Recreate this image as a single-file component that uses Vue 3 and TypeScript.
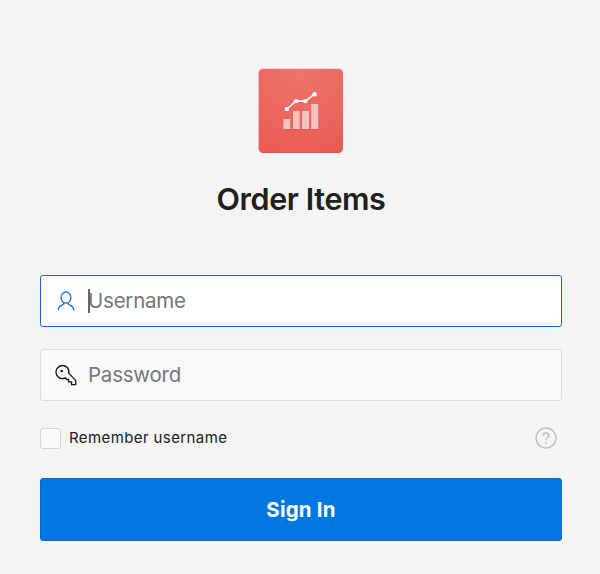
<script setup lang="ts">
import { ref } from 'vue'

const username = ref<string>('')
const password = ref<string>('')
const remember = ref<boolean>(false)
</script>

<template>
  <main class="login">
    <header class="brand">
      <svg class="logo" width="86" height="85" viewBox="0 0 86 85" aria-hidden="true">
        <defs>
          <radialGradient id="tile" cx="0.5" cy="0" r="1.05">
            <stop offset="0" stop-color="#ed766f" />
            <stop offset="1" stop-color="#e95b54" />
          </radialGradient>
        </defs>
        <rect x="0.6" y="0.8" width="84.4" height="84.2" rx="4.5" fill="url(#tile)" />
        <path d="M4 84.5H81" stroke="#da524c" stroke-width="0.9" />
        <path d="M25.4 61h6.8v1.2h-6.8zM35 61h6.6v1.2h-6.6zM44 61h7v1.2h-7zM53 61h7.2v1.2h-7.2z" fill="#d9514b" opacity="0.4" />
        <path d="M25.4 51h6.8v10h-6.8zM35 43h6.6v18H35zM44 43h7v18h-7zM53.2 36h7v25h-7z" fill="#f8c2c0" />
        <path d="M28.9 42.1L38.1 34.2h9.2l9.3-7" fill="none" stroke="#d9514b" stroke-opacity="0.4" stroke-width="1.6" />
        <path d="M28.9 41L38.1 33.1h9.2l9.3-7" fill="none" stroke="#fff" stroke-width="1.6" />
        <g fill="#fff">
          <circle cx="28.9" cy="41" r="2.2" /><circle cx="38.1" cy="33.1" r="2.2" />
          <circle cx="47.3" cy="33.1" r="2.2" /><circle cx="56.6" cy="26.3" r="2.2" />
        </g>
      </svg>
      <h1>Order Items</h1>
    </header>

    <form class="form" @submit.prevent>
      <label class="field active">
        <svg width="24" height="24" viewBox="0 0 24 24" fill="none" stroke="#1a70d8" stroke-width="1.3">
          <ellipse cx="12" cy="8.6" rx="4.9" ry="5.6" />
          <path d="M4.3 21.2v-.8c0-3.4 3.2-3.8 5.4-5.1v-1.6M19.7 21.2v-.8c0-3.4-3.2-3.8-5.4-5.1v-1.6" />
        </svg>
        <span class="entry">
          <input v-model="username" class="user" type="text" placeholder="Username" />
          <span class="caret"></span>
        </span>
      </label>

      <label class="field">
        <svg width="24" height="24" viewBox="0 0 24 24" fill="none" stroke="#111" stroke-width="1.3">
          <path d="M14.7 10.1l7 7.3v4.3h-4.1v-2.8h-3v-2.4h-1.8l-1.4-1.7c-2.5 1.3-5.4 1.1-7.5-1.1-2.6-2.6-2.6-6.9 0-9.3 2.6-2.5 6.7-2.5 9.2-.1 1.6 1.6 2.1 3.7 1.6 5.8z" />
          <circle cx="7.8" cy="8" r="1.2" fill="#111" stroke="none" />
        </svg>
        <span class="entry">
          <input v-model="password" class="pass" type="password" placeholder="Password" />
        </span>
      </label>

      <div class="options">
        <label class="remember">
          <input v-model="remember" type="checkbox" />
          <span>Remember username</span>
        </label>
        <button class="help" type="button" aria-label="Help">
          <svg width="22" height="22" viewBox="0 0 22 22" fill="none" stroke="#bdbdbd" stroke-width="1.4">
            <circle cx="11" cy="11" r="10" />
            <path d="M8 8.8c0-1.7 1.2-2.8 2.9-2.8s3 1 3 2.6c0 2.1-2.9 2.1-2.9 4.6" />
            <circle cx="11" cy="16.1" r="1" fill="#bdbdbd" stroke="none" />
          </svg>
        </button>
      </div>

      <button class="submit" type="submit"><span>Sign In</span></button>
    </form>
  </main>
</template>

<style>
body {
  margin: 0;
  background: #f4f4f4;
}
</style>

<style scoped>
* {
  box-sizing: border-box;
}
.login {
  min-height: 574px;
  padding: 68px 38px 0 40px;
  background: #f4f4f4;
  color: #202020;
  font-family: Inter, sans-serif;
}
.brand {
  display: flex;
  flex-direction: column;
  align-items: center;
  height: 207px;
}
.logo {
  display: block;
}
h1 {
  margin: 26px 0 0;
  font-size: 30.5px;
  line-height: 40px;
  font-weight: 600;
  letter-spacing: -0.4px;
  white-space: nowrap;
}
.form {
  display: flex;
  flex-direction: column;
}
.field {
  display: flex;
  align-items: center;
  height: 52px;
  margin-bottom: 22px;
  padding-left: 13px;
  border: 1px solid #dcdcdc;
  border-radius: 3px;
  background: #f9f9f9;
}
.field.active {
  border-color: #1268da;
  background: #fff;
}
.entry {
  position: relative;
  flex: 1;
  margin-left: 10px;
}
.entry input {
  display: block;
  width: 100%;
  height: 30px;
  padding: 0;
  border: 0;
  outline: 0;
  background: transparent;
  color: #202020;
  font: 400 20.5px/30px Inter, sans-serif;
  letter-spacing: -0.22px;
}
.entry input::placeholder {
  color: #777;
  opacity: 1;
}
.caret {
  position: absolute;
  left: 0;
  top: 3px;
  width: 1.5px;
  height: 24px;
  background: #666;
}
.options {
  display: flex;
  align-items: center;
  justify-content: space-between;
  height: 22px;
  margin: 4px 5px 29px 0;
}
.remember {
  display: flex;
  align-items: center;
  gap: 8px;
  font-size: 15px;
  line-height: 20px;
  letter-spacing: 0.4px;
}
.remember input {
  appearance: none;
  width: 21px;
  height: 21px;
  margin: 0;
  border: 1.5px solid #d3d3d3;
  border-radius: 3px;
  background: #fafafa;
}
.help {
  display: flex;
  padding: 0;
  border: 0;
  background: none;
}
.submit {
  height: 63px;
  padding: 0;
  border: 1px solid #0868cc;
  border-radius: 3px;
  background: #0076e0;
  color: #fff;
  font: 700 20.5px/28px Inter, sans-serif;
  letter-spacing: 0.2px;
}
</style>
